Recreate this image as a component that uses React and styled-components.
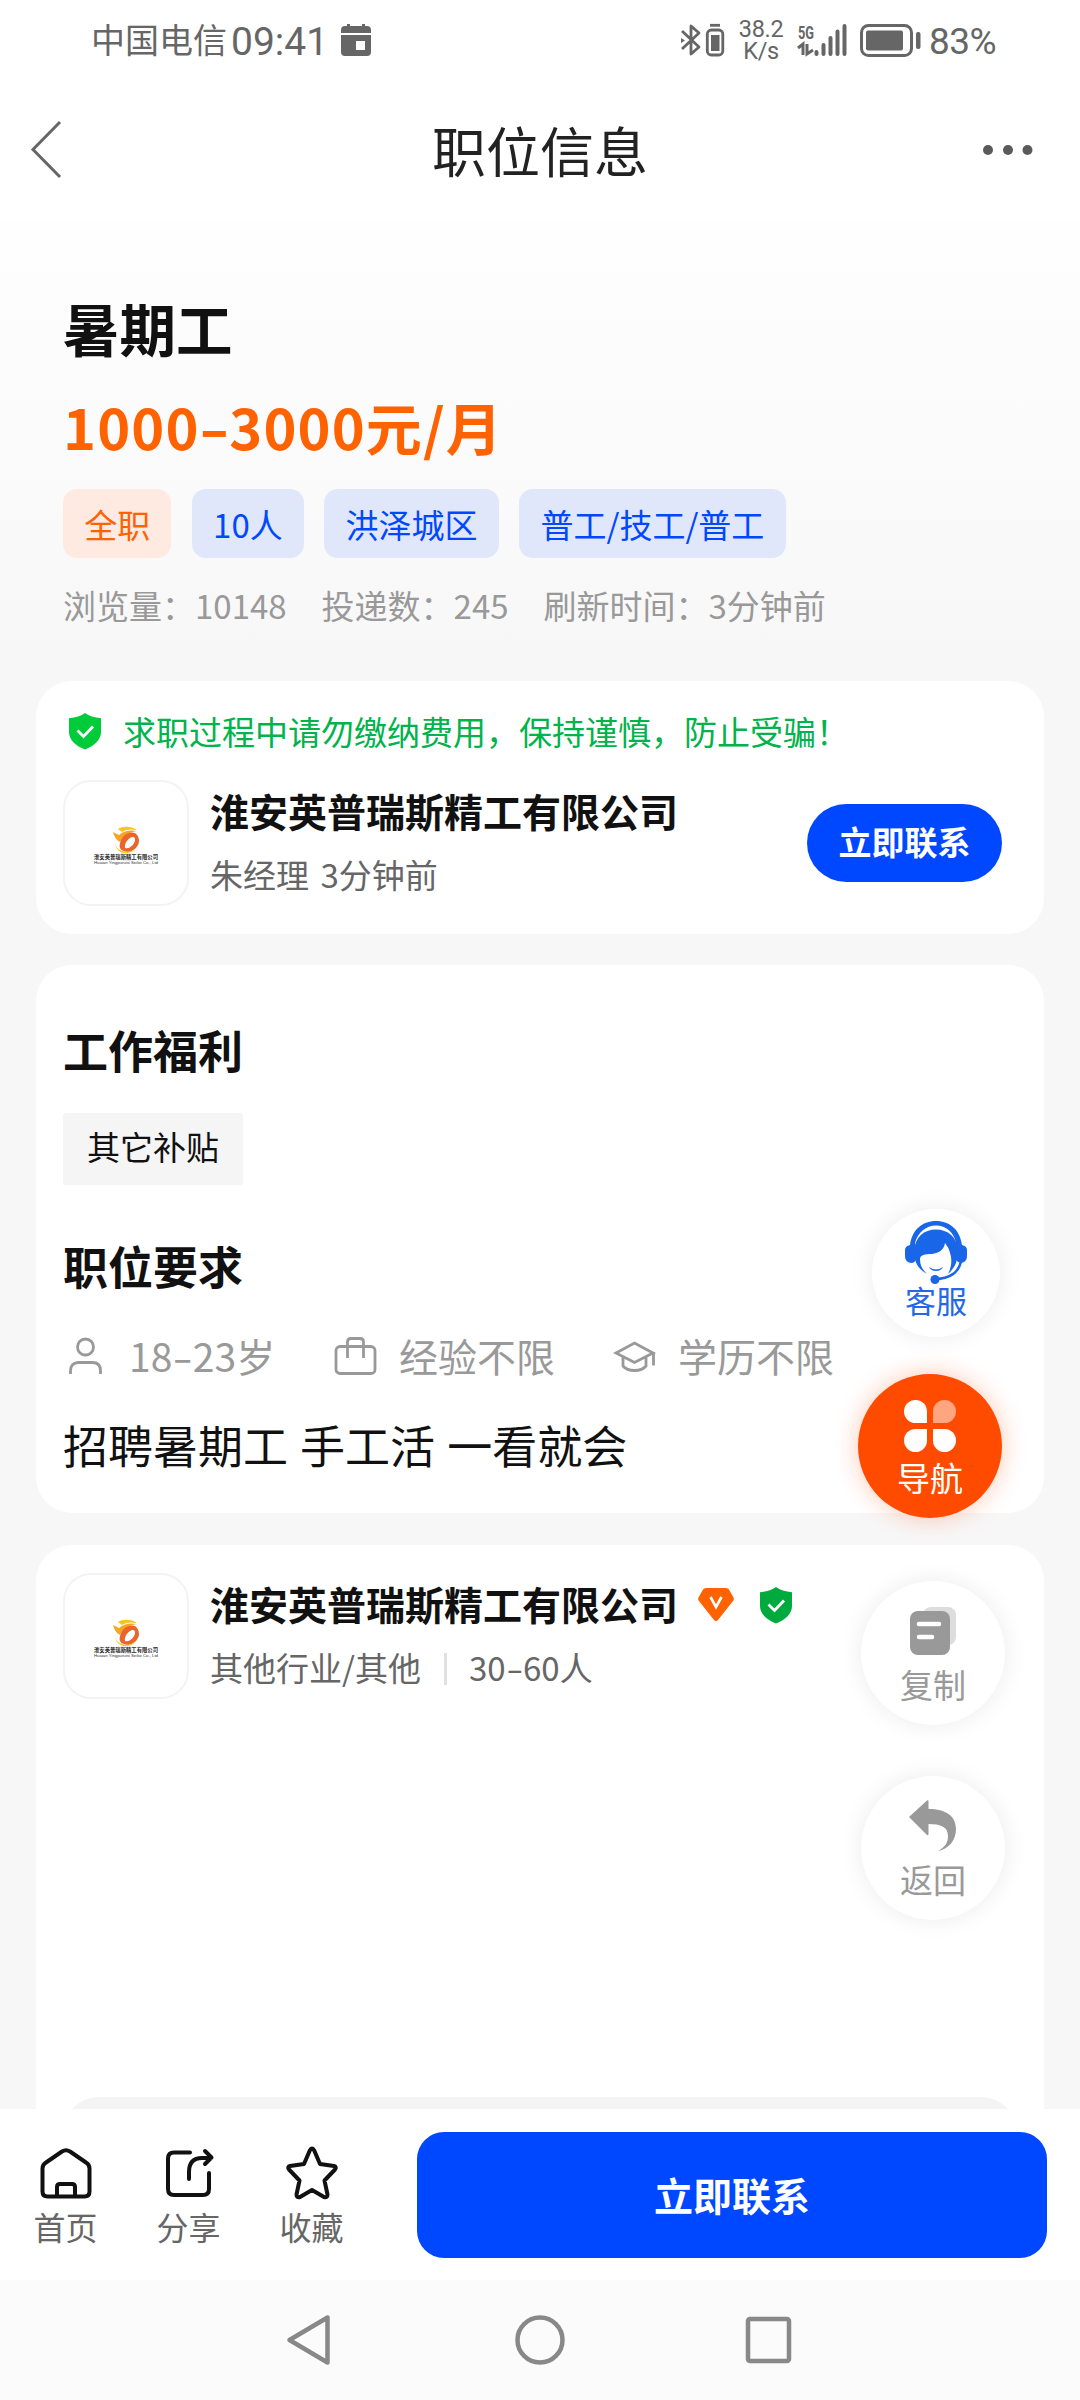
import React from "react";
import styled, { createGlobalStyle } from "styled-components";

const GlobalStyle = createGlobalStyle`
  * {
    box-sizing: border-box;
  }

  body {
    margin: 0;
    background: #fff;
    font-family: Roboto, "Noto Sans CJK SC", sans-serif;
  }

  svg {
    display: block;
    flex: none;
    overflow: visible;
  }
`;

const Page = styled.div`
  display: flex;
  flex-direction: column;
  width: 1080px;
  height: 2400px;
  overflow: hidden;
  color: #111;
  font-family: "Noto Sans CJK SC", sans-serif;
`;

/* status bar */
const StatusBar = styled.div`
  display: flex;
  align-items: center;
  justify-content: space-between;
  height: 80px;
  padding: 0 84px 0 91px;
  color: #666;
`;

const StatusGroup = styled.div`
  display: flex;
  align-items: center;
`;

const Carrier = styled.span`
  font-size: 34px;
  line-height: 44px;
  margin-top: -2px;
`;

const Clock = styled.span`
  width: 100px;
  margin: 3px 10px 0 4px;
  font-family: Roboto, sans-serif;
  font-size: 39px;
  line-height: 44px;
`;

const NetSpeed = styled.div`
  display: flex;
  flex-direction: column;
  align-items: center;
  width: 46px;
  margin: 0 14px 0 12px;
  font-family: Roboto, sans-serif;
  font-size: 23.5px;
  line-height: 22px;
  letter-spacing: -0.3px;
`;

const BatteryText = styled.span`
  margin: 3px 0 0 7px;
  font-family: Roboto, sans-serif;
  font-size: 37px;
  line-height: 44px;
  letter-spacing: -0.6px;
`;

const Spacer = styled.span`
  width: 12px;
`;

const Header = styled.header`
  display: flex;
  align-items: center;
  justify-content: space-between;
  height: 140px;
  padding: 0 46px 0 30px;
`;

const HeaderTitle = styled.h1`
  margin: 0;
  font-size: 54px;
  font-weight: 400;
  line-height: 70px;
  color: #222;
`;

const Side = styled.div`
  display: flex;
  width: ${(p) => (p.$end ? 60 : 76)}px;
  justify-content: ${(p) => (p.$end ? "flex-end" : "flex-start")};
`;

const Main = styled.main`
  position: relative;
  flex: 1;
  min-height: 0;
  overflow: hidden;
  background: linear-gradient(#fefefe 0, #fcfcfc 150px, #f7f7f7 460px);
`;

const Hero = styled.section`
  padding: 72px 63px 54px;
`;

const JobTitle = styled.h2`
  margin: 0 0 29px;
  font-size: 56.5px;
  font-weight: 700;
  line-height: 70px;
`;

const Salary = styled.div`
  margin-bottom: 28px;
  font-size: 56px;
  font-weight: 700;
  line-height: 70px;
  letter-spacing: 1.1px;
  color: #ff6200;
`;

/* wide hyphen between two numbers */
const Dash = styled.span`
  display: inline-block;
  margin: 0 ${(p) => p.$space}px;
  letter-spacing: 0;
  transform: scaleX(1.5);
`;

const Tags = styled.div`
  display: flex;
  gap: 20.5px;
  margin-bottom: 25px;
`;

const Tag = styled.span`
  height: 69px;
  padding: 1px 21.2px 0;
  border-radius: 14px;
  font-size: 33px;
  line-height: 69px;
  color: ${(p) => (p.$hot ? "#ff6200" : "#0048ff")};
  background: ${(p) => (p.$hot ? "#feeae1" : "#e0e7fb")};
`;

const Stats = styled.div`
  display: flex;
  gap: 35px;
  font-size: 33px;
  line-height: 44px;
  color: #999;
`;

const Card = styled.section`
  margin: 0 36px ${(p) => p.$gap || 31}px;
  padding: ${(p) => p.$pad};
  border-radius: 36px;
  background: #fff;
`;

const Notice = styled.div`
  display: flex;
  align-items: center;
  gap: 16px;
  height: 44px;
  margin-bottom: 27px;
  font-size: 33px;
  line-height: 44px;
  color: #00b34b;
`;

const Company = styled.div`
  display: flex;
  align-items: center;
  height: 126px;
`;

const LogoBox = styled.div`
  flex: none;
  width: 126px;
  height: 126px;
  margin-right: 21px;
  border: 2px solid #f3f3f3;
  border-radius: 28px;
`;

const CompanyInfo = styled.div`
  display: flex;
  flex-direction: column;
  flex: 1;
  gap: 17px;
  margin-top: -5px;
`;

const CompanyName = styled.div`
  display: flex;
  align-items: center;
  font-size: 39px;
  font-weight: 700;
  line-height: 50px;
`;

const Badges = styled.span`
  display: flex;
  gap: 20px;
  margin: 4px 0 0 16px;
`;

const CompanyMeta = styled.div`
  display: flex;
  align-items: center;
  font-size: 33px;
  line-height: 44px;
  word-spacing: 4px;
  color: #666;
`;

const Divider = styled.i`
  width: 3px;
  height: 32px;
  margin: 4px 22px 0 23px;
  background: #e0e0e0;
`;

const ContactPill = styled.button`
  width: 195px;
  height: 78px;
  margin-right: 15px;
  padding: 0 0 5px;
  border: none;
  border-radius: 39px;
  background: #0048ff;
  color: #fff;
  font-family: inherit;
  font-size: 33px;
  font-weight: 700;
`;

const SectionTitle = styled.h3`
  margin: 0 0 ${(p) => p.$gap}px;
  font-size: 45px;
  font-weight: 700;
  line-height: 60px;
`;

const Welfare = styled.span`
  display: block;
  width: fit-content;
  margin-bottom: 51px;
  padding: 1px 24px 6px;
  border-radius: 3px;
  font-size: 33px;
  line-height: 65px;
  background: #f5f5f5;
`;

const Requirements = styled.div`
  display: flex;
  align-items: center;
  height: 50px;
  margin-bottom: 35px;
  font-size: 39px;
  line-height: 50px;
  color: #999;
`;

const Requirement = styled.div`
  display: flex;
  align-items: center;
  gap: 22px;
  width: ${(p) => p.$width || "auto"};
`;

const Description = styled.p`
  margin: 0;
  font-size: 45px;
  line-height: 60px;
  word-spacing: 2px;
`;

const MapPanel = styled.div`
  height: 400px;
  margin-top: 398px;
  border-radius: 36px;
  background: #f4f4f4;
`;

/* floating buttons over the cards */
const FloatButton = styled.div`
  position: absolute;
  top: ${(p) => p.$top}px;
  left: ${(p) => p.$left}px;
  display: flex;
  flex-direction: column;
  align-items: center;
  width: ${(p) => p.$size || 144}px;
  height: ${(p) => p.$size || 144}px;
  border-radius: 50%;
  font-size: ${(p) => (p.$size ? 31 : 33)}px;
  line-height: 40px;
  color: ${(p) => p.$color || "#999"};
  background: ${(p) => p.$bg || "#fff"};
  box-shadow: 0 0 24px ${(p) => p.$shadow || "rgba(0, 0, 0, 0.08)"};
`;

const FloatIcon = styled.div`
  margin: ${(p) => p.$top}px 0 ${(p) => p.$gap}px;
`;

const BottomBar = styled.div`
  display: flex;
  align-items: center;
  justify-content: space-between;
  height: 171px;
  padding: 0 33px 0 4px;
  background: #fff;
`;

const BarItems = styled.div`
  display: flex;
`;

const BarItem = styled.div`
  display: flex;
  flex-direction: column;
  align-items: center;
  width: 123px;
  gap: 4px;
  margin-top: 7px;
  font-size: 32px;
  line-height: 44px;
  color: #666;
`;

const ContactButton = styled.button`
  width: 630px;
  height: 126px;
  padding: 0 0 1px;
  border: none;
  border-radius: 27px;
  background: #0048ff;
  color: #fff;
  font-family: inherit;
  font-size: 39px;
  font-weight: 700;
`;

const NavBar = styled.div`
  display: flex;
  align-items: center;
  justify-content: center;
  gap: 177.5px;
  height: 120px;
  background: #fbfbfb;
`;

const CalendarIcon = () => (
  <svg width="30" height="33" viewBox="0 0 30 33" fill="#666">
    <path d="M0 9V6q0-4 4-4h2V0h3v2h12V0h3v2h2q4 0 4 4v3z" />
    <path fillRule="evenodd" d="M0 11h30v17q0 4-4 4H4q-4 0-4-4zM15 17v9h9v-9z" />
  </svg>
);

const BluetoothIcon = () => (
  <svg width="44" height="34" viewBox="0 0 44 34" fill="none" stroke="#666" strokeWidth="2.8">
    <path d="M0 8l17 16-8 7V3l8 7L0 26" strokeLinejoin="round" />
    <path d="M-1 15l4 2.5-4 2.5z" fill="#666" stroke="none" />
    <path d="M28 2.3h10" />
    <rect x="25.300" y="7" width="15.5" height="25" rx="4" />
    <rect x="29" y="12" width="8.5" height="16" fill="#666" stroke="none" />
  </svg>
);

const SignalIcon = () => (
  <svg width="50" height="34" viewBox="0 0 50 34">
    <text x="0" y="16" fill="#666" fontFamily="Roboto" fontSize="18" fontWeight="700" textLength="16" lengthAdjust="spacingAndGlyphs">
      5G
    </text>
    <path d="M0 25l5-4v11M9 21v10l6-4" fill="none" stroke="#666" strokeWidth="3" />
    <path d="M18.5 29v2M25.500 22v9M32.500 15v16M39.500 8.500v22.500M46.500 3v28" stroke="#666" strokeWidth="4" strokeLinecap="round" />
  </svg>
);

const BatteryIcon = () => (
  <svg width="62" height="34" viewBox="0 0 62 34">
    <rect x="1.500" y="2.500" width="50" height="30" rx="7" fill="none" stroke="#666" strokeWidth="3" />
    <rect x="6" y="7.500" width="37" height="20" rx="2" fill="#666" />
    <rect x="56" y="9" width="4.500" height="17" rx="2" fill="#666" />
  </svg>
);

const ShieldIcon = ({ color, size = 44 }) => (
  <svg width={size} height="44" viewBox={`${(44 - size) / 2} 0 ${size} 44`}>
    <path d="M22 4c4 3 9 4.500 16 5.200V23c0 8-7 14-16 17.500C13 37 6 31 6 23V9.200C13 8.500 18 7 22 4z" fill={color} />
    <path d="M14.500 21.500l6 6 9.500-10" fill="none" stroke="#fff" strokeWidth="2.800" />
  </svg>
);

const DiamondIcon = () => (
  <svg width="44" height="44" viewBox="0 0 44 44">
    <path d="M12 5h20q2 0 3 1.500l4.500 8q1 2-.5 3.500L24 37q-2 2.300-4 0L5 18q-1.500-1.500-.5-3.500l4.500-8Q10 5 12 5z" fill="#ff6200" />
    <path d="M16.500 14l5.500 10 5.500-10" fill="none" stroke="#fff" strokeWidth="2.600" />
  </svg>
);

const CompanyLogo = () => (
  <svg width="122" height="122" viewBox="0 0 122 122">
    <path d="M53 47c5-3 13-3 19 1-6-1-11-1-15 2z" fill="#f7c31c" />
    <path d="M48 50l6 3c6-5 12-5 18-4-7 1-13 4-17 11-4-2-6-6-7-10z" fill="#f5a623" />
    <path
      fillRule="evenodd"
      d="M55 61c2-8 9-12 15-10 4 3 5 8 3 12-3 6-10 8-14 6-4-1-5-4-4-8zm5 5c3 1 7-1 9-5 2-3 1-6-1-6-4 0-9 6-8 11z"
      fill="#e9652c"
    />
    <path d="M50 60c0 6 5 9 11 10 4 0 8-2 10-4-4 6-13 7-18 2-2-2-3-5-3-8z" fill="#f8c418" />
    <text x="29" y="77" fontSize="5.4" fontWeight="700" textLength="64" lengthAdjust="spacingAndGlyphs" fill="#222">
      淮安英普瑞斯精工有限公司
    </text>
    <text x="29" y="81.500" fontSize="3.8" fontFamily="Liberation Sans" textLength="64" lengthAdjust="spacingAndGlyphs" fill="#333">
      Huaian Yingpuruisi Seiko Co., Ltd
    </text>
  </svg>
);

const PersonIcon = () => (
  <svg width="44" height="44" viewBox="0 0 44 44" fill="none" stroke="#999" strokeWidth="2.800">
    <circle cx="22.500" cy="14" r="8" />
    <path d="M7.500 41v-3q0-8.500 8-8.500h14q8 0 8 8.500v3" />
  </svg>
);

const BagIcon = () => (
  <svg width="44" height="44" viewBox="0 0 44 44" fill="none" stroke="#999" strokeWidth="2.800">
    <rect x="3" y="13.500" width="39" height="27" rx="4" />
    <path d="M14.500 25V9q0-3.500 3.500-3.500h9q3.500 0 3.500 3.500v16" />
  </svg>
);

const DegreeIcon = () => (
  <svg width="44" height="44" viewBox="0 0 44 44" fill="none" stroke="#999" strokeWidth="2.800">
    <path d="M4 20L22.500 10 41 20l-18.500 9.500zM11 24v9c5 6 18 6 23 0v-9M41.500 19v13.500" />
  </svg>
);

const ServiceIcon = () => (
  <svg width="62" height="63" viewBox="0 0 62 63" fill="#1a66e8">
    <path d="M5 24C7 9 17 0 31 0s24 9 26 24q5 1 5 5v6q0 6-6 7-5-1-5-5V22C49 11 41 4.500 31 4.500S13 11 10 22l1 16q-1 4-5 4-6-1-6-7v-6q0-4 5-5z" />
    <path d="M9 30C10 16 19 8.500 31 8.500S52 16 53 29c0 11-3 18-10 24 4-8 4-15 2-21-1-5-3-7-5-10-1 7-6 10-13 11-7 0-12 1-12 5 0 6 2 10 7 15C13 48 9 41 9 30z" />
    <path d="M24 46q7 5 14 0-2 4-7 4t-7-4z" />
    <path d="M56 40c-2 11-11 18-26 18" fill="none" stroke="#1a66e8" strokeWidth="2.500" />
    <circle cx="30" cy="58.500" r="4.500" />
  </svg>
);

const PetalsIcon = () => (
  <svg width="52" height="52" viewBox="0 0 52 52" fill="#fff">
    <path d="M11.500 0A11.500 11.500 0 0 1 23 11.500V23H11.500a11.500 11.500 0 0 1 0-23z" />
    <path d="M40.500 0a11.500 11.500 0 0 1 0 23H29V11.500A11.500 11.500 0 0 1 40.500 0z" opacity=".5" />
    <path d="M11.500 29H23v11.500A11.500 11.500 0 1 1 11.500 29z" />
    <path d="M29 29h11.500A11.500 11.500 0 1 1 29 40.500z" />
  </svg>
);

const CopyIcon = () => (
  <svg width="46" height="48" viewBox="0 0 46 48">
    <rect x="13" y="0" width="33" height="38" rx="8" fill="#ddd" />
    <rect x="0" y="4" width="40" height="44" rx="8" fill="#999" />
    <path d="M9 17h20M9 30h13" stroke="#fff" strokeWidth="4.500" strokeLinecap="round" />
  </svg>
);

const ReturnIcon = () => (
  <svg width="48" height="51" viewBox="0 0 48 51" fill="#999">
    <path d="M0 17L18 .5q1.500-1 1.500 1V9C37 9 47 16 47 29c0 11-7 20-18 22 7-4 10-8 10-15 0-9-7-12-19.500-12v10q0 2-1.500 1z" />
  </svg>
);

const HomeIcon = () => (
  <svg width="52" height="52" viewBox="0 0 52 52" fill="none" stroke="#111" strokeWidth="4" strokeLinejoin="round">
    <path d="M22 3.500q4-2.500 8 0l16 11q3.500 2 3.500 6V43.500q0 5-5 5H7.500q-5 0-5-5V20.500q0-4 3.500-6z" />
    <path d="M17 48V39q0-3 3-3h12q3 0 3 3v9" />
  </svg>
);

const ShareIcon = () => (
  <svg width="52" height="52" viewBox="0 0 52 52" fill="none" stroke="#111" strokeWidth="4" strokeLinecap="round" strokeLinejoin="round">
    <path d="M27 4.500H11q-6 0-6 6V41q0 6 6 6h29q6 0 6-6V25" />
    <path d="M26 31v-7q0-14 13-14h9M42 3l6.500 6.500L42 16" />
  </svg>
);

const StarIcon = () => (
  <svg width="52" height="52" viewBox="0 0 52 52" fill="none" stroke="#111" strokeWidth="4" strokeLinejoin="round">
    <path d="M24 2q2-3 4 0l6 14 14 2q3 1 1 3.500L38.500 32.500l3 14q0 3.500-3.500 2.500l-12-7-12 7q-3.500 1-3.500-2.500l3-14L3 21.500q-2-2.500 1-3.500l14-2z" />
  </svg>
);

const App = () => {
  return (
    <Page>
      <GlobalStyle />
      <StatusBar>
        <StatusGroup>
          <Carrier>中国电信</Carrier>
          <Clock>09:41</Clock>
          <CalendarIcon />
        </StatusGroup>
        <StatusGroup>
          <BluetoothIcon />
          <NetSpeed>
            <span>38.2</span>
            <span>K/s</span>
          </NetSpeed>
          <SignalIcon />
          <Spacer />
          <BatteryIcon />
          <BatteryText>83%</BatteryText>
        </StatusGroup>
      </StatusBar>

      <Header>
        <Side>
          <svg width="32" height="58" viewBox="0 0 32 58" fill="none" stroke="#666" strokeWidth="3">
            <path d="M30 1L3 28.500 30 56" />
          </svg>
        </Side>
        <HeaderTitle>职位信息</HeaderTitle>
        <Side $end>
          <svg width="52" height="12" viewBox="0 0 52 12" fill="#5a5a5a">
            <circle cx="6" cy="6" r="5" />
            <circle cx="26" cy="6" r="5" />
            <circle cx="45.500" cy="6" r="5" />
          </svg>
        </Side>
      </Header>

      <Main>
        <Hero>
          <JobTitle>暑期工</JobTitle>
          <Salary>
            1000<Dash $space={4.5}>-</Dash>3000元/月
          </Salary>
          <Tags>
            <Tag $hot>全职</Tag>
            <Tag>10人</Tag>
            <Tag>洪泽城区</Tag>
            <Tag>普工/技工/普工</Tag>
          </Tags>
          <Stats>
            <span>浏览量：10148</span>
            <span>投递数：245</span>
            <span>刷新时间：3分钟前</span>
          </Stats>
        </Hero>

        <Card $pad="28px 27px">
          <Notice>
            <ShieldIcon color="#00cc3a" />
            <span>求职过程中请勿缴纳费用，保持谨慎，防止受骗！</span>
          </Notice>
          <Company>
            <LogoBox>
              <CompanyLogo />
            </LogoBox>
            <CompanyInfo>
              <CompanyName>淮安英普瑞斯精工有限公司</CompanyName>
              <CompanyMeta>朱经理 3分钟前</CompanyMeta>
            </CompanyInfo>
            <ContactPill>立即联系</ContactPill>
          </Company>
        </Card>

        <Card $pad="55px 27px 38px" $gap={32}>
          <SectionTitle $gap={33}>工作福利</SectionTitle>
          <Welfare>其它补贴</Welfare>
          <SectionTitle $gap={34}>职位要求</SectionTitle>
          <Requirements>
            <Requirement $width="270px">
              <PersonIcon />
              <span>
                18<Dash $space={3.5}>-</Dash>23岁
              </span>
            </Requirement>
            <Requirement $width="279px">
              <BagIcon />
              <span>经验不限</span>
            </Requirement>
            <Requirement>
              <DegreeIcon />
              <span>学历不限</span>
            </Requirement>
          </Requirements>
          <Description>招聘暑期工 手工活 一看就会</Description>
        </Card>

        <Card $pad="28px 27px">
          <Company>
            <LogoBox>
              <CompanyLogo />
            </LogoBox>
            <CompanyInfo>
              <CompanyName>
                淮安英普瑞斯精工有限公司
                <Badges>
                  <DiamondIcon />
                  <ShieldIcon color="#00aa3c" size={36} />
                </Badges>
              </CompanyName>
              <CompanyMeta>
                其他行业/其他
                <Divider />
                <span>
                  30<Dash $space={3}>-</Dash>60人
                </span>
              </CompanyMeta>
            </CompanyInfo>
          </Company>
          <MapPanel />
        </Card>

        <FloatButton $top={989} $left={872} $size={128} $color="#2468e8">
          <FloatIcon $top={12} $gap={-4}>
            <ServiceIcon />
          </FloatIcon>
          客服
        </FloatButton>
        <FloatButton $top={1154} $left={858} $color="#fff" $bg="#ff4b00" $shadow="rgba(255, 75, 0, 0.3)">
          <FloatIcon $top={26} $gap={5}>
            <PetalsIcon />
          </FloatIcon>
          导航
        </FloatButton>
        <FloatButton $top={1361} $left={861}>
          <FloatIcon $top={26} $gap={9}>
            <CopyIcon />
          </FloatIcon>
          复制
        </FloatButton>
        <FloatButton $top={1556} $left={861}>
          <FloatIcon $top={24} $gap={8}>
            <ReturnIcon />
          </FloatIcon>
          返回
        </FloatButton>
      </Main>

      <BottomBar>
        <BarItems>
          <BarItem>
            <HomeIcon />
            首页
          </BarItem>
          <BarItem>
            <ShareIcon />
            分享
          </BarItem>
          <BarItem>
            <StarIcon />
            收藏
          </BarItem>
        </BarItems>
        <ContactButton>立即联系</ContactButton>
      </BottomBar>

      <NavBar>
        <svg width="52" height="52" viewBox="0 0 52 52" fill="none" stroke="#888" strokeWidth="4.500" strokeLinejoin="round">
          <path d="M4.500 26L42.500 3.500v45z" />
        </svg>
        <svg width="52" height="52" viewBox="0 0 52 52" fill="none" stroke="#888" strokeWidth="4.500">
          <circle cx="26" cy="26" r="22.500" />
        </svg>
        <svg width="52" height="52" viewBox="0 0 52 52" fill="none" stroke="#888" strokeWidth="4.500">
          <rect x="4" y="5" width="41" height="42" rx="2" />
        </svg>
      </NavBar>
    </Page>
  );
};

export default App;
